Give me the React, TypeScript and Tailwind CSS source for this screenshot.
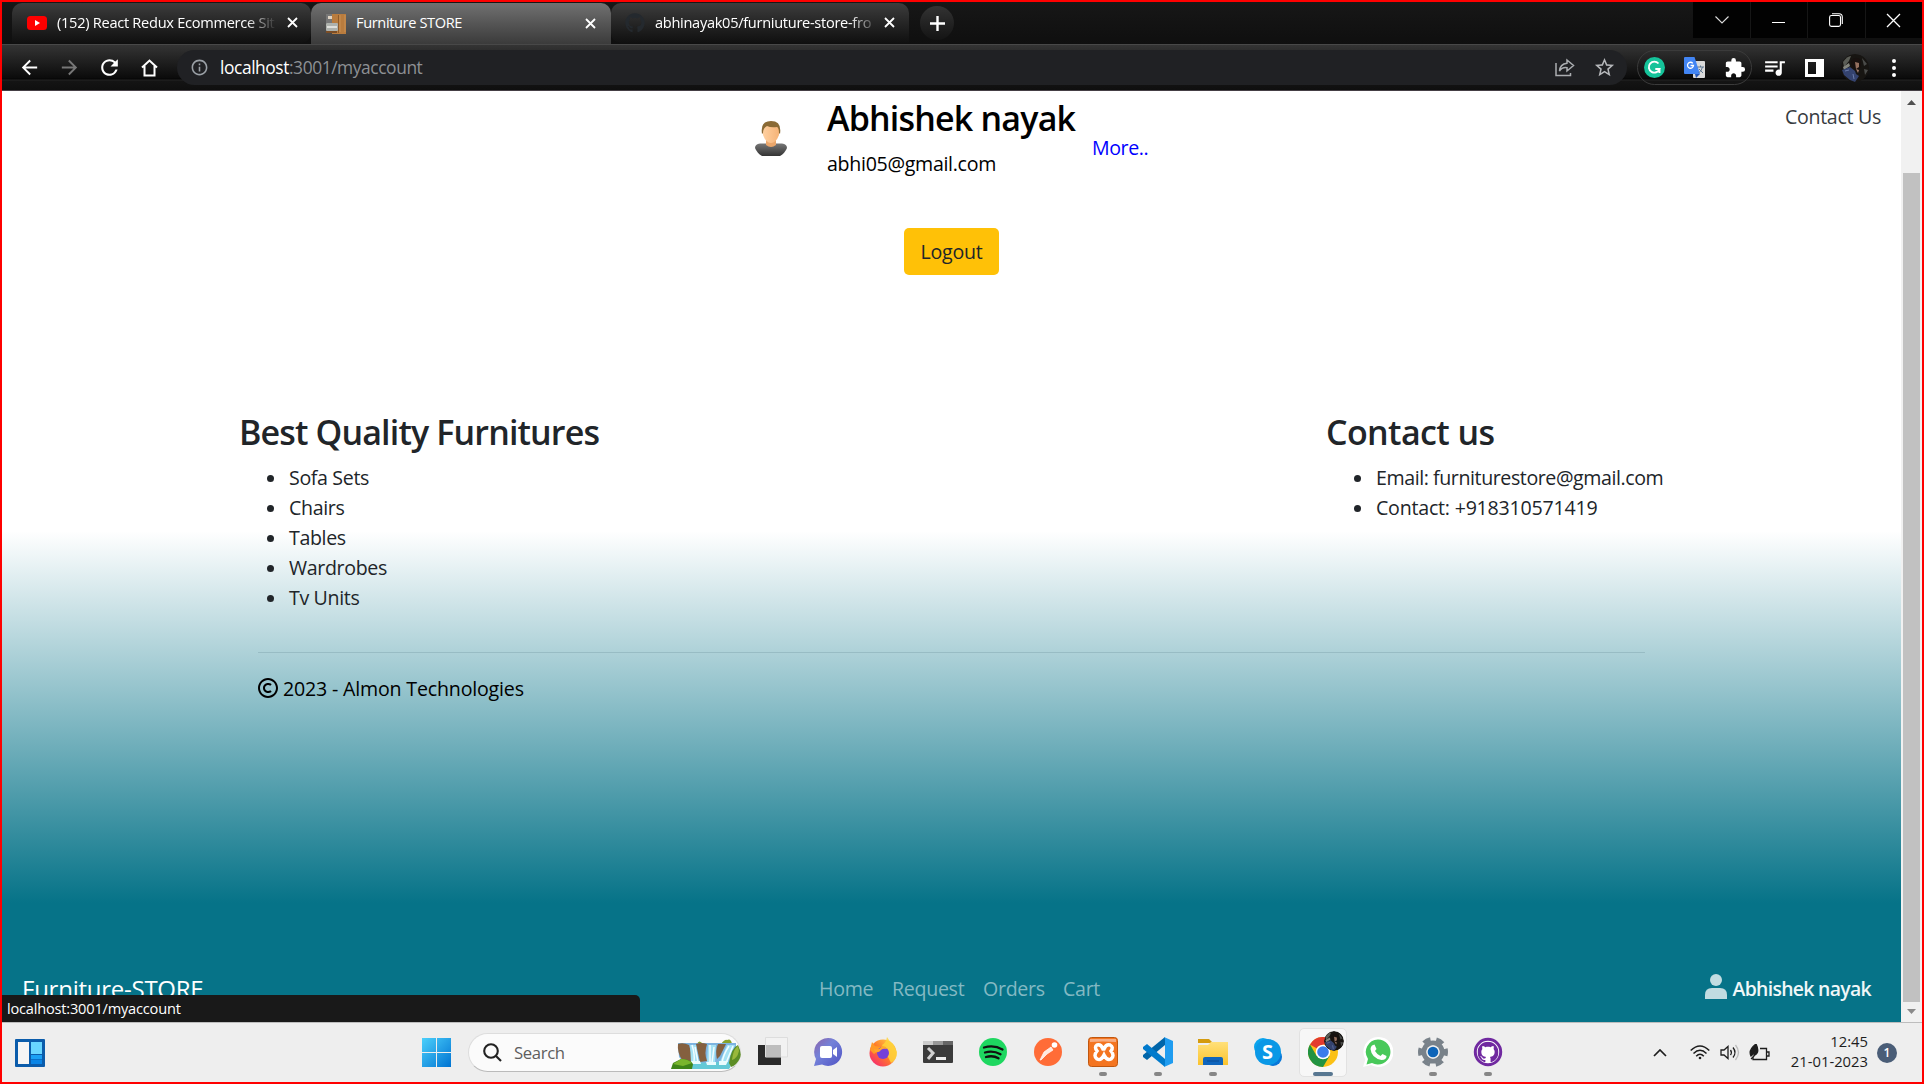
import type { ReactNode } from "react";
import { SiGithub } from "react-icons/si";
import { FaGithub } from "react-icons/fa";
import { BiCopyright } from "react-icons/bi";
import { MdExtension, MdStarBorder, MdQueueMusic, MdInfoOutline, MdRefresh, MdArrowBack, MdArrowForward } from "react-icons/md";

function Cross({ s = 9, w = 2, c = "#fff" }: { s?: number; w?: number; c?: string }) {
  return (
    <svg width={s} height={s} viewBox="0 0 10 10" className="shrink-0 overflow-visible">
      <path d="M0 0L10 10M10 0L0 10" stroke={c} strokeWidth={w} />
    </svg>
  );
}

function TabStrip() {
  return (
    <div className="flex h-[42px] shrink-0 bg-gradient-to-b from-[#171717] to-[#0f0f0f] text-[14.6px] text-white">
      <div className="ml-[10px] mt-px flex h-10 w-[299px] items-center rounded-t-[10px] rounded-br-[10px] bg-gradient-to-b from-[#3d3d3d] to-[#101010] pb-px pl-[15px]">
        <svg width="20" height="14" viewBox="0 0 20 14" className="mt-px">
          <rect width="20" height="14" rx="3.5" fill="#f00" />
          <path d="M8 4v6l5-3z" fill="#fff" />
        </svg>
        <span className="ml-[10px] w-[222px] whitespace-nowrap tracking-[-0.28px] [mask-image:linear-gradient(to_right,#000_85%,transparent_99%)]">(152) React Redux Ecommerce Sit</span>
        <span className="ml-[9px] flex"><Cross /></span>
      </div>
      <div className="mt-px flex h-[41px] w-[300px] items-center rounded-t-[10px] bg-gradient-to-b from-[#717171] to-[#3b3b3b] pb-[2px] pl-[15px]">
        <svg width="20" height="20" viewBox="0 0 20 20" className="mt-0.5">
          <rect x="6" width="14" height="20" fill="#b97c3e" />
          <path d="M12.500 1v18" stroke="#8d5a29" />
          <path d="M14 1v17M19 1v17" stroke="#c99052" />
          <path d="M0 0h6v9H0z" fill="#777" />
          <rect y="9" width="12" height="8" rx="1" fill="#aeb2ad" />
          <path d="M1 13h10" stroke="#dedfdb" strokeWidth="2" />
          <path d="M0 17h11v2H0z" fill="#7b4d25" />
          <path d="M2 2h4v3H2z" fill="#ded3c4" />
        </svg>
        <span className="ml-[10px] w-[219px] whitespace-nowrap tracking-[-0.38px]">Furniture STORE</span>
        <span className="ml-[11px] mt-px flex"><Cross /></span>
      </div>
      <div className="mt-px flex h-10 w-[298px] items-center rounded-t-[10px] rounded-bl-[10px] bg-gradient-to-b from-[#3d3d3d] to-[#101010] pb-px pl-[14px]">
        <FaGithub size={20} color="#24292e" className="mt-px" />
        <span className="ml-[10px] w-[221px] whitespace-nowrap tracking-[-0.3px] [mask-image:linear-gradient(to_right,#000_88%,transparent_101%)]">abhinayak05/furniuture-store-fro</span>
        <span className="ml-[9px] flex"><Cross /></span>
      </div>
      <div className="ml-[11px] mt-1 flex h-[34px] w-[34px] items-center justify-center rounded-full bg-gradient-to-b from-[#333] to-[#141414]">
        <svg width="15" height="15" viewBox="0 0 15 15"><path d="M7.500 0v15M0 7.500h15" stroke="#fff" strokeWidth="2.400" /></svg>
      </div>
      <div className="ml-auto flex h-9 gap-px bg-[#161616]">
        <div className="flex w-[57px] items-center justify-center bg-[#020202]">
          <svg width="14" height="8" viewBox="0 0 14 8"><path d="M.5 .5L7 7L13.500 .5" stroke="#ddd" fill="none" strokeWidth="1.100" /></svg>
        </div>
        <div className="flex w-[56px] items-center justify-center bg-[#020202] pr-0.5"><div className="mt-1 h-px w-[13px] bg-white" /></div>
        <div className="flex w-[57px] items-center justify-center bg-[#020202] pr-0.5">
          <svg width="14" height="14" viewBox="0 0 14 14" fill="none" stroke="#fff" strokeWidth="1.100"><rect x=".6" y="2.500" width="10.900" height="10.900" rx="1.800" /><path d="M3 .7H10q3.300 0 3.300 3.300v7" /></svg>
        </div>
        <div className="flex w-[56px] items-center justify-center bg-[#020202] pr-0.5 pt-px"><Cross s={13} w={1} /></div>
      </div>
    </div>
  );
}

function Photo({ size }: { size: number }) {
  return (
    <svg width={size} height={size} viewBox="0 0 28 28" className="rounded-full">
      <circle cx="14" cy="14" r="14" fill="#171512" />
      <path d="M2 8q4-6 8-6l-2 5-5 6z" fill="#5b5d56" />
      <path d="M21 4l5 6-3 2zM23 15l4 1-3 5z" fill="#4a4b49" />
      <path d="M2 13l6-4 1 3-6 4z" fill="#84867e" />
      <path d="M10 7q4-6 10-1v7l-5 4-4-4z" fill="#17110f" />
      <path d="M14 8l4 1v4l-3 2z" fill="#94705f" />
      <path d="M1 16l8-3 5 4 1 3 3 2-4 6-5-2-6-5z" fill="#34436f" />
      <path d="M4 17l4-1M12 20l1 5" stroke="#6a7cab" />
      <path d="M15 15l3 1-1 3z" fill="#a17c6b" />
    </svg>
  );
}

function Toolbar() {
  return (
    <div className="flex h-[47px] shrink-0 items-center border-b border-t border-b-[#453f45] border-t-[#484848] bg-[linear-gradient(to_bottom,#343434_0,#0b0b0b_33px,#050505_34px,#242424_35px,#141414_36px,#0f0f0f_100%)] text-white">
      <div className="flex w-[175px] items-center pl-[16px]">
        <MdArrowBack size={23} />
        <MdArrowForward size={23} color="#777" className="ml-[17px]" />
        <MdRefresh size={25} className="ml-[16px]" />
        <svg width="17" height="18" viewBox="0 0 17 18" className="ml-[19px]" fill="none" stroke="#fff" strokeWidth="2"><path d="M1 8.500L8.500 1.500L16 8.500M3.500 7v9.500h10V7" /></svg>
      </div>
      <div className="flex h-[35px] w-[1450px] items-center rounded-full bg-[#202124] pl-[13px]">
        <MdInfoOutline size={19} color="#9aa0a6" />
        <span className="ml-[11px] whitespace-nowrap text-[17.4px] tracking-[-0.43px] text-[#8d9094]"><span className="text-white">localhost</span>:3001/myaccount</span>
        <svg width="20" height="19" viewBox="0 0 20 19" className="ml-auto" fill="none" stroke="#aaadb0" strokeWidth="1.500"><path d="M1 5v12.500h14.500V15" /><path d="M12 2l6.500 5.500L12 13V9.700Q7 9 4.500 13Q5 6 12 5.200z" /></svg>
        <MdStarBorder size={23} color="#b5b7ba" className="ml-[18px] mr-[11px]" />
      </div>
      <div className="ml-[10px] flex h-[35px] w-[115px] items-center rounded-full border-[1.500px] border-[#3b3b3b] pl-[6px]">
        <svg width="21" height="21" viewBox="0 0 21 21"><circle cx="10.500" cy="10.500" r="10.500" fill="#15c39a" /><path d="M14.500 6.500A5.500 5.500 0 1 0 15.500 12h-4.200M15.500 12v4" fill="none" stroke="#fff" strokeWidth="1.900" /></svg>
        <svg width="21" height="21" viewBox="0 0 21 21" className="ml-[19px]">
          <rect x="9" y="4" width="12" height="17" rx="1" fill="#dadada" />
          <path d="M1 0h9.500L16 17H1q-1 0-1-1V1q0-1 1-1z" fill="#4285f4" />
          <path d="M11 17h5l-4 4z" fill="#2556b5" />
          <path d="M8.800 6.300A3 3 0 1 0 9.500 8.500H6.600" fill="none" stroke="#fff" strokeWidth="1.300" />
          <path d="M13.500 10h6.500M16.500 8.500V10M18.500 10q-1 4-4 6M15 12l4 4" fill="none" stroke="#5d7791" />
        </svg>
        <MdExtension size={22} className="ml-[19px]" />
      </div>
      <MdQueueMusic size={25} className="ml-[10px]" />
      <div className="ml-[18px] flex h-[18px] w-[19px] justify-end border-[3px] border-white"><div className="w-[5px] bg-white" /></div>
      <div className="ml-[17px]"><Photo size={28} /></div>
      <div className="ml-[23px] flex flex-col gap-[3px]"><i className="h-1 w-1 rounded-full bg-white" /><i className="h-1 w-1 rounded-full bg-white" /><i className="h-1 w-1 rounded-full bg-white" /></div>
    </div>
  );
}

function FooterColumn({ title, children }: { title: ReactNode; children: ReactNode }) {
  return (
    <div className="whitespace-nowrap text-[#212529]">
      <h3 className="text-[34px] font-[560] leading-[42px] tracking-[-0.6px]">{title}</h3>
      <ul className="mt-[10px] pl-[50px] text-[19.600px] leading-[30px] tracking-[-0.35px]">{children}</ul>
    </div>
  );
}

function Item({ children }: { children: ReactNode }) {
  return (
    <li className="flex items-center"><span className="-ml-[22px] mr-[15px] h-[7px] w-[7px] rounded-full bg-[#212529]" />{children}</li>
  );
}

function Person() {
  return (
    <svg width="34" height="36" viewBox="0 0 34 36">
      <defs>
        <linearGradient id="shirt" x2="0" y2="1"><stop stopColor="#777" /><stop offset="1" stopColor="#333" /></linearGradient>
        <linearGradient id="face"><stop stopColor="#ffd0a0" /><stop offset="1" stopColor="#f5b377" /></linearGradient>
      </defs>
      <path d="M1 28q0-4 5-4.500h22q5 .5 5 4.500-2 5-7 8H8q-5-3-7-8z" fill="url(#shirt)" />
      <path d="M12 18h10v7q-5 4-10 0z" fill="#eaa66b" />
      <path d="M9 8q8-7 16 0v7q-3 8-8 8t-8-8z" fill="url(#face)" />
      <path d="M8 14Q6 1 17 1t9 13l-1-1q0-5-2-6-6 1-10-1-4 2-4 7z" fill="#8a6a35" />
    </svg>
  );
}

function Page() {
  return (
    <div className="flex h-[931px] w-[1899px] flex-col bg-[linear-gradient(to_bottom,#fff_0,#fff_440px,#067388_812px)] font-[370]">
      <div className="flex h-[137px] items-start whitespace-nowrap text-[19.600px] leading-[30px] tracking-[-0.3px] text-black">
        <div className="ml-[752px] mt-[29px]"><Person /></div>
        <div className="ml-[39px] mt-[6px] w-[250px]">
          <h3 className="text-[34px] font-[560] leading-[42px] tracking-[-0.8px]">Abhishek nayak</h3>
          <p className="mt-[10px]">abhi05@gmail.com</p>
        </div>
        <span className="ml-[15px] mt-[42px] tracking-[-0.4px] text-[#0000ff]">More..</span>
        <span className="ml-auto mr-[20px] mt-[11px] text-[#373b3f]">Contact Us</span>
      </div>
      <button className="ml-[902px] h-[47px] w-[95px] shrink-0 rounded-[5px] bg-[#ffc107] pt-px text-[19.600px] tracking-[-0.2px] text-[#212529]">Logout</button>
      <div className="mt-[136px] flex h-[241px] shrink-0 pl-[237px]">
        <div className="w-[1087px]">
          <FooterColumn title={<span className="tracking-[-0.85px]">Best Quality Furnitures</span>}>
            <Item>Sofa Sets</Item>
            <Item>Chairs</Item>
            <Item>Tables</Item>
            <Item>Wardrobes</Item>
            <Item>Tv Units</Item>
          </FooterColumn>
        </div>
        <FooterColumn title="Contact us">
          <Item><span className="tracking-[-0.42px]">Email: furniturestore@gmail.com</span></Item>
          <Item><span className="tracking-[-0.22px]">Contact: +918310571419</span></Item>
        </FooterColumn>
      </div>
      <div className="mx-[256px] h-px shrink-0 bg-[#98bcc4]" />
      <div className="ml-[254px] mt-[21px] flex items-center text-[19.600px] leading-[30px] tracking-[-0.18px] text-black">
        <BiCopyright size={24} className="-mt-0.5" /><span className="ml-[3px]">2023 - Almon Technologies</span>
      </div>
      <div className="mb-[13px] mt-auto flex h-[40px] items-center whitespace-nowrap text-[19.600px] tracking-[-0.3px] text-[#83b9c3]">
        <span className="ml-[20px] w-[797px] text-[24px] tracking-[-0.25px] text-white">Furniture-STORE</span>
        <span className="w-[73px]">Home</span><span className="w-[91px]">Request</span><span className="w-[80px]">Orders</span><span>Cart</span>
        <svg width="22" height="25" viewBox="0 0 22 25" className="-mt-[5px] ml-auto" fill="#c1dce1"><circle cx="11" cy="6" r="6" /><path d="M0 25v-4q0-7 7-7h8q7 0 7 7v4z" /></svg>
        <span className="ml-[6px] mr-[30px] text-[19.400px] font-[560] tracking-[-0.680px] text-[#f0f7f8]">Abhishek nayak</span>
      </div>
    </div>
  );
}

function Scrollbar() {
  return (
    <div className="flex w-[21px] flex-col items-center bg-[#f1f1f1]">
      <svg width="9" height="5" viewBox="0 0 9 5" className="mt-[9px]"><path d="M0 5L4.500 0L9 5z" fill="#505050" /></svg>
      <div className="mt-[68px] w-[17px] flex-1 bg-[#c1c1c1]" />
      <svg width="9" height="5" viewBox="0 0 9 5" className="mb-[8px] mt-[7px]"><path d="M0 0L4.500 5L9 0z" fill="#8a8a8a" /></svg>
    </div>
  );
}

function Waterfall() {
  return (
    <svg width="70" height="30" viewBox="0 0 70 30">
      <path d="M26 5q2-5 6 0zM50 5q4-5 6-4 4-2 5 4z" fill="#86a32c" />
      <path d="M7 4h58v21H14L8 18z" fill="#7db4e0" />
      <path d="M7 5q5-2 11 1 3 8 3 17l-10-2q-5-8-4-16zM25 5q5-2 11 0-3 9 0 17l-7 1q-2-9-4-18zM47 5h8l-6 12-3 3q-2-9 1-15z" fill="#84603f" />
      <path d="M19 6h6l3 18h-8zM37 6h8l-1 19h-8zM56 6h8l-8 19h-8z" fill="#a4e2f4" />
      <path d="M21 6q3 9 2 17M24 8l3 15M39 6v18M43 8l-2 16M58 7q-6 9-7 17M62 7l-7 17" fill="none" stroke="#f1fdff" strokeWidth="1.500" />
      <path d="M9 30q8-9 18-7 10 2 18 0l13 0q3 4 0 7z" fill="#63c9d6" />
      <path d="M20 22h9l1 3h-9zM35 23h10v3h-9zM48 22h9l-2 4h-7z" fill="#e9fbfd" />
      <path d="M0 30l2-6 8-4q9 0 12 5l-1 5z" fill="#3e8418" />
      <path d="M2 25l8-5q7 0 11 4l-9 3z" fill="#79b52c" />
      <path d="M58 24q2-15 9-18 4 8 2 13-3 7-9 9z" fill="#5c8d25" />
      <path d="M61 21q1-11 6-14l1 5q-2 8-7 9z" fill="#99b83b" />
    </svg>
  );
}

const APPS: { name: string; run?: boolean; icon: ReactNode }[] = [
  { name: "task-view", icon: <g><path d="M0 8h23v20H0z" fill="#2a2a2a" /><path d="M7.500 .5h22v19.500h-22z" fill="#f2f2f2" stroke="#ddd" /><path d="M8 8h15v12H8z" fill="#bdbdbd" /></g> },
  { name: "chat", icon: <g><path d="M15 1a14 14 0 1 1-6 26.600L1 29l2-7A14 14 0 0 1 15 1z" fill="url(#chatg)" /><rect x="7" y="9" width="12" height="12" rx="2" fill="#fff" /><path d="M20 13l4-3v10l-4-3z" fill="#fff" /></g> },
  { name: "firefox", icon: <g><circle cx="15" cy="16" r="13.500" fill="url(#ffx)" /><path d="M14 8q4-2 5-8 2 4 6 7l4 8q0 8-6 11z" fill="#ffd33a" opacity=".85" /><path d="M2 13l2-8 3 4 6 1-3 4-4 3z" fill="#ff9a26" /><circle cx="15" cy="16" r="6" fill="#7540d8" /><path d="M6 12q5 2 8-3 4 0 5 3-4-1-6 1-2 3-6 2z" fill="#ffa62d" /></g> },
  { name: "terminal", icon: <g><rect y="4" width="30" height="22" rx="1" fill="#3b3b3b" /><path d="M0 4h10v4H0z" fill="#ccc" /><path d="M10 4h10v4H10z" fill="#999" /><path d="M20 4h10v4H20z" fill="#666" /><path d="M5 11l5 5-5 6" fill="none" stroke="#d2d2d2" strokeWidth="3" /><path d="M13 21.500h10" stroke="#eee" strokeWidth="3" /></g> },
  { name: "spotify", icon: <g><circle cx="15" cy="15" r="14" fill="#1ed760" /><path d="M6 10.500q10-3 18.500 2M7 15.500q8-2.500 15.500 1.700M8 20q7-2 12.500 1.300" fill="none" stroke="#111" strokeWidth="2.300" strokeLinecap="round" /></g> },
  { name: "postman", icon: <g><circle cx="15" cy="15" r="14" fill="#ff6c37" /><circle cx="21.500" cy="8" r="2.800" fill="#fff" /><path d="M7 23l4-8 7-5 2 3-6 4-6 6z" fill="#ffe9e0" stroke="#fff" strokeWidth=".7" /></g> },
  { name: "xampp", run: true, icon: <g><rect x=".5" y=".5" width="29" height="29" rx="3" fill="#f47521" stroke="#c0570f" /><path d="M2 2h26v3q-13-1-26 0z" fill="#f7ad82" /><path d="M9 8q4-1 6 4h1q2-5 6-4 4 2 1 6 4 5 0 8-4 2-7-4-3 6-7 4-4-3 0-8-3-4 0-6z" fill="none" stroke="#fff" strokeWidth="3.500" /></g> },
  { name: "code", run: true, icon: <g><path d="M22 0v8L4 23l-4-3v-2z" fill="#0065a9" /><path d="M0 10l4-3 18 15v8L0 12z" fill="#007acc" /><path d="M21 0l9 4v22l-9 4q1-1 1-3V3q0-2-1-3z" fill="#1f9cf0" /></g> },
  { name: "explorer", run: true, icon: <g><path d="M0 2h11l4 4H0z" fill="#d49b0f" /><path d="M0 8h10l3-3h17v23H0z" fill="url(#fold)" /><path d="M5 28v-6q0-2 2-2h16q2 0 2 2v6z" fill="#0f65bd" /><path d="M9 24h12" stroke="#0a4d94" /></g> },
  { name: "skype", icon: <g><circle cx="10" cy="10" r="9" fill="#0aa4ee" /><circle cx="20" cy="20" r="9" fill="#0877d8" /><circle cx="15" cy="15" r="13" fill="#0a98e6" /><text x="9" y="22" fontSize="20" fontWeight="700" fill="#fff">S</text></g> },
  { name: "chrome", run: true, icon: <g><circle cx="15" cy="15" r="15" fill="#fbc116" /><path d="M15 15L2 7.500A15 15 0 0 1 28 7.500H15z" fill="#e33b2e" /><path d="M15 15L8.500 18.700 2 7.500A15 15 0 0 0 15 30l6.500-11z" fill="#229342" /><circle cx="15" cy="15" r="7.300" fill="#fff" /><circle cx="15" cy="15" r="5.800" fill="#3a7cec" /></g> },
  { name: "whatsapp", icon: <g><path d="M15 0a15 15 0 1 1-7 28L0 30l2.300-7.500A15 15 0 0 1 15 0z" fill="#fff" /><path d="M15 2.500A12.500 12.500 0 1 1 9 26l-5.500 1.500L5 22A12.500 12.500 0 0 1 15 2.500z" fill="#48c95a" /><path d="M9 8.500l2.500-1 2 4.500-1.500 2q2 3.500 5.500 5l2-2 4 2q0 4-5 4-10-2-11-11 .2-2.500 1.500-3.500z" fill="#fff" /></g> },
  { name: "settings", run: true, icon: <g><circle cx="15" cy="15" r="9" fill="none" stroke="#79828a" strokeWidth="5" /><circle cx="15" cy="15" r="13" fill="none" stroke="#79828a" strokeWidth="4" strokeDasharray="7.600 6.014" strokeDashoffset="3.800" /><circle cx="15" cy="15" r="6.700" fill="#eee" /><circle cx="15" cy="15" r="5.300" fill="#0d64b8" /></g> },
  { name: "github", run: true, icon: <g><circle cx="15" cy="15" r="12.700" fill="#fff" stroke="#7029a0" strokeWidth="3" /><g transform="translate(4.500 4.500) scale(.875)"><SiGithub size={24} color="#7029a0" /></g></g> },
];

function Taskbar() {
  return (
    <div className="flex h-[60px] shrink-0 items-center border-t border-[#bdbdbd] bg-[#eee]">
      <svg width="30" height="28" viewBox="0 0 30 28" className="ml-[13px]"><rect width="30" height="28" rx="1" fill="#0b5cab" /><path d="M3 3h11v22H3z" fill="#f5f5f5" /><path d="M16 3h11v12H16z" fill="#69d6ff" /><path d="M16 16h11v4H16z" fill="#1aa0f4" /><path d="M16 20.500h11V25H16z" fill="#0a85e6" /></svg>
      <svg width="29" height="29" viewBox="0 0 29 29" className="ml-[377px]"><defs><linearGradient id="win" x2="1" y2="1"><stop stopColor="#4cd0fb" /><stop offset="1" stopColor="#0073d2" /></linearGradient></defs><path d="M0 0h14v14H0zM15 0h14v14H15zM0 15h14v14H0zM15 15h14v14H15z" fill="url(#win)" /></svg>
      <div className="ml-[17px] flex h-[39px] w-[273px] items-center rounded-full border border-[#ddd] border-b-[#bbb] bg-[#fbfbfb] pl-[14px]">
        <svg width="19" height="19" viewBox="0 0 19 19" fill="none" stroke="#222" strokeWidth="2.100"><circle cx="8" cy="8" r="6.800" /><path d="M12.500 12.500L18 18" /></svg>
        <span className="ml-[12px] text-[16.700px] tracking-[-0.35px] text-[#5e5e5e]">Search</span>
        <span className="-mr-px ml-auto flex pt-0.5"><Waterfall /></span>
      </div>
      <div className="ml-[4px] flex">
        {APPS.map((a) => (
          <div key={a.name} className="flex w-[55px] justify-center">
            <div className={a.name === "chrome" ? "relative flex h-[49px] w-[48px] flex-col items-center rounded-[5px] border border-[#e2e2e2] bg-[#f7f7f7] pt-[8px]" : "relative flex h-[49px] w-[48px] flex-col items-center pt-[9px]"}>
              <svg width="30" height="30" viewBox="0 0 30 30" className="shrink-0">
                <defs>
                  <linearGradient id="chatg" x2="1" y2="1"><stop stopColor="#8d62a8" /><stop offset=".4" stopColor="#7482d9" /><stop offset="1" stopColor="#4f52c4" /></linearGradient>
                  <linearGradient id="ffx" x1="1" y1="0" x2="0" y2="1"><stop stopColor="#ffe14a" /><stop offset=".5" stopColor="#ff7a2a" /><stop offset="1" stopColor="#f4177e" /></linearGradient>
                  <linearGradient id="fold" x2="0" y2="1"><stop stopColor="#ffe07a" /><stop offset="1" stopColor="#fbc32d" /></linearGradient>
                </defs>
                {a.icon}
              </svg>
              {a.name === "chrome" && <span className="absolute right-[2px] top-[2px]"><Photo size={20} /></span>}
              {a.run && <span className={a.name === "chrome" ? "mt-[5px] h-1 w-5 rounded-full bg-[#587791]" : "mt-[5px] h-1 w-2 rounded-full bg-[#868686]"} />}
            </div>
          </div>
        ))}
      </div>
      <svg width="14" height="8" viewBox="0 0 14 8" className="ml-auto" fill="none" stroke="#1d1d1d" strokeWidth="1.700"><path d="M1 7l6-6 6 6" /></svg>
      <svg width="20" height="15" viewBox="0 0 20 15" className="ml-[23px]" fill="none" stroke="#1d1d1d" strokeWidth="1.500"><path d="M.7 5.500q9.300-9 18.600 0M3.500 8.500q6.500-6.500 13 0M6.200 11.200q3.800-3.800 7.600 0" /><circle cx="10" cy="13" r="1.300" fill="#1d1d1d" stroke="none" /></svg>
      <svg width="20" height="17" viewBox="0 0 20 17" className="ml-[10px]" fill="none" stroke="#1d1d1d" strokeWidth="1.300"><path d="M1 6v5h3l4 3.500v-12L4 6zM10.500 6q1.800 2.500 0 5M13 3.500q4 5 0 10" /><path d="M15.500 1q6 7.500 0 15" stroke="#bbb" /></svg>
      <svg width="21" height="17" viewBox="0 0 21 17" className="ml-[9px]" fill="none" stroke="#1d1d1d" strokeWidth="1.300"><path d="M11 4.500h6.500v11H4v-2M18 8h2v4h-2" /><path d="M2 15q4-3 5-8-2 3-5 5-3-6 5-12 4 8-1 11" fill="#1d1d1d" /></svg>
      <div className="ml-[16px] w-[82px] whitespace-nowrap pb-1 text-right text-[14.800px] leading-[20px] text-[#1d1d1d]">12:45<br />21-01-2023</div>
      <div className="ml-[9px] mr-[25px] flex h-5 w-5 items-center justify-center rounded-full bg-[#4a5d77] text-[12px] font-semibold text-white">1</div>
    </div>
  );
}

export default function App() {
  return (
    <div className="relative flex h-[1084px] w-[1924px] flex-col overflow-hidden border-2 border-[#ff0000] bg-white font-['Open_Sans','Noto_Sans',sans-serif]">
      <TabStrip />
      <Toolbar />
      <div className="flex h-[931px] shrink-0"><Page /><Scrollbar /></div>
      <Taskbar />
      <div className="absolute left-0 top-[993px] flex h-[27px] w-[638px] items-center rounded-tr-[5px] bg-[#191919] pl-[5px] text-[14.600px] tracking-[-0.2px] text-white">localhost:3001/myaccount</div>
    </div>
  );
}
